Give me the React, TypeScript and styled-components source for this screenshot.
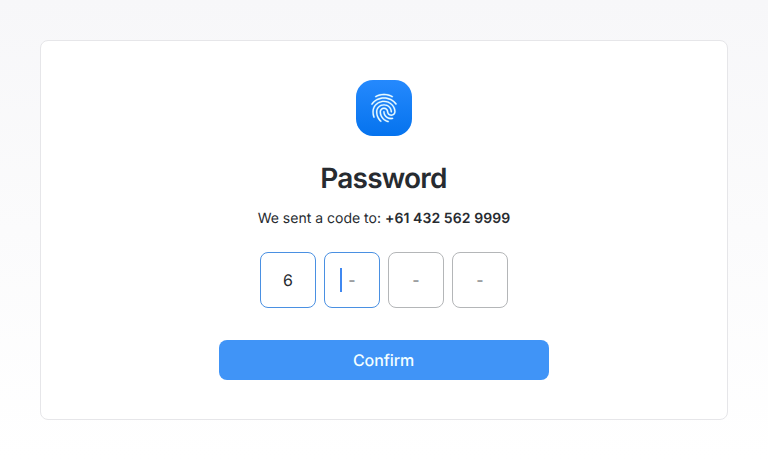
import React from 'react';
import styled, { createGlobalStyle } from 'styled-components';
import { MdFingerprint } from 'react-icons/md';

const GlobalStyle = createGlobalStyle`
  *, *::before, *::after { box-sizing: border-box; }
  body {
    margin: 0;
    font-family: Inter, "Liberation Sans", sans-serif;
    color: #272b30;
    text-rendering: geometricPrecision;
  }
`;

const Page = styled.main`
  display: flex;
  height: 460px;
  padding: 40px;
  background: linear-gradient(#f7f7f9, #ffffff);
`;

const Card = styled.form`
  flex: 1;
  display: flex;
  flex-direction: column;
  align-items: center;
  padding-top: 39px;
  border: 1px solid #e6e6e9;
  border-radius: 8px;
  background: #fff;
`;

const Badge = styled.div`
  display: grid;
  place-items: center;
  width: 56px;
  height: 56px;
  border-radius: 17px;
  background: linear-gradient(#2589fd, #0573ee);
  color: #e9fbff;

  path:not([fill='none']) {
    stroke: currentColor;
    stroke-width: 0.15px;
  }
`;

const Title = styled.h1`
  margin: 24px 0 0;
  padding-right: 1px;
  font-size: 28px;
  font-weight: 600;
  line-height: 36px;
  letter-spacing: -0.8px;
`;

const Hint = styled.p`
  margin: 13px 0 0;
  font-size: 14px;
  line-height: 20px;
`;

const Phone = styled.strong`
  font-weight: 600;
  letter-spacing: 0.08px;
`;

const Digits = styled.div`
  display: flex;
  gap: 8px;
  margin-top: 23px;
`;

const Digit = styled.div<{ $active?: boolean; $empty?: boolean }>`
  position: relative;
  display: grid;
  place-items: center;
  width: 56px;
  height: 56px;
  padding-bottom: ${(p) => (p.$empty ? '1px' : '0')};
  border: 1px solid ${(p) => (p.$active ? '#4a90e2' : '#b4b6b8')};
  border-radius: 8px;
  font-size: 16px;
  line-height: 24px;
  color: ${(p) => (p.$empty ? '#7d7f82' : '#272b30')};
`;

const Caret = styled.span`
  position: absolute;
  left: 15px;
  top: 15px;
  width: 2px;
  height: 24px;
  background: #4088f0;
`;

const Confirm = styled.button`
  width: 330px;
  height: 40px;
  margin-top: 32px;
  padding: 0 1px 0 0;
  border: 0;
  border-radius: 8px;
  background: #4094f7;
  color: #f4ffff;
  font: 500 16px/24px Inter, "Liberation Sans", sans-serif;
  letter-spacing: -0.1px;
  text-rendering: geometricPrecision;
`;

export default function App() {
  return (
    <>
      <GlobalStyle />
      <Page>
        <Card>
          <Badge>
            <MdFingerprint size={34} />
          </Badge>
          <Title>Password</Title>
          <Hint>
            We sent a code to: <Phone>+61 432 562 9999</Phone>
          </Hint>
          <Digits>
            <Digit $active>6</Digit>
            <Digit $active $empty>
              <Caret />-
            </Digit>
            <Digit $empty>-</Digit>
            <Digit $empty>-</Digit>
          </Digits>
          <Confirm type="button">Confirm</Confirm>
        </Card>
      </Page>
    </>
  );
}
